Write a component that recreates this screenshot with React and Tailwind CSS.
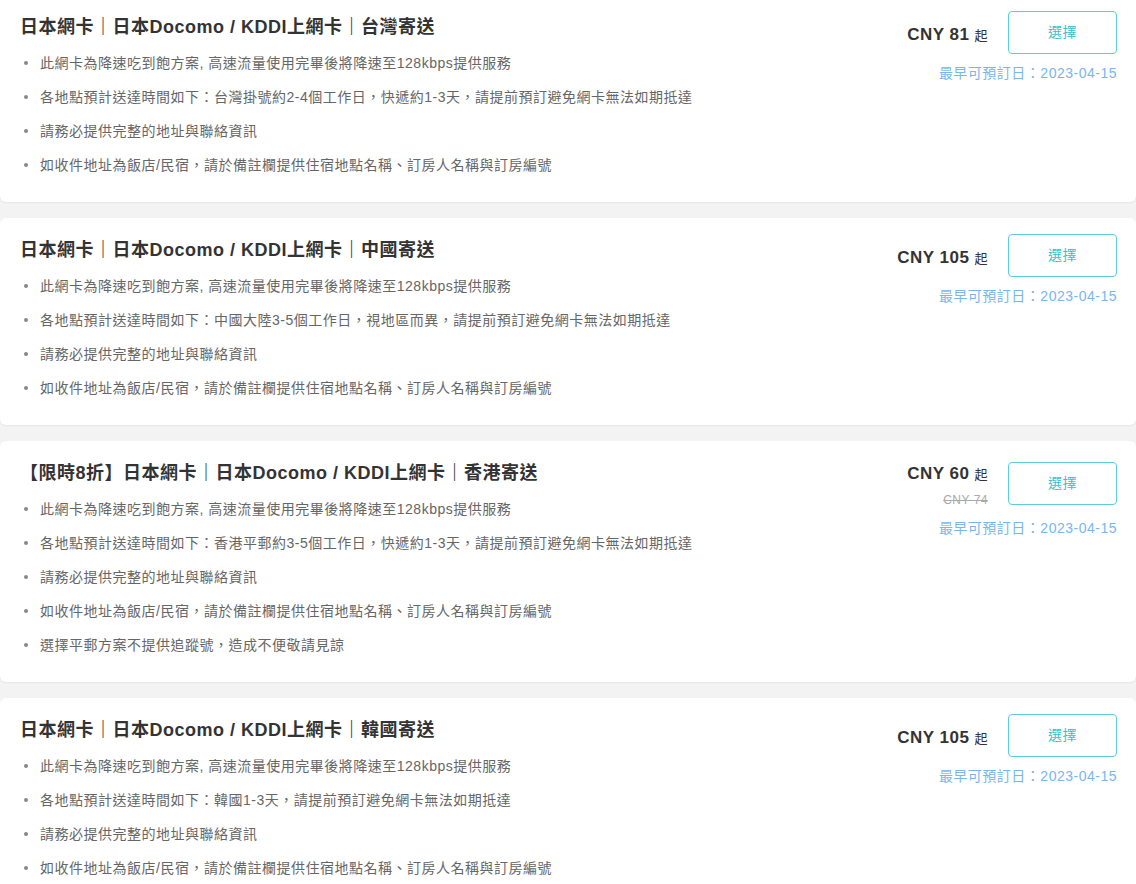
import React from 'react';

const common = [
  '此網卡為降速吃到飽方案, 高速流量使用完畢後將降速至128kbps提供服務',
];
const addr = [
  '請務必提供完整的地址與聯絡資訊',
  '如收件地址為飯店/民宿，請於備註欄提供住宿地點名稱、訂房人名稱與訂房編號',
];

const plans = [
  {
    title: '日本網卡｜日本Docomo / KDDI上網卡｜台灣寄送',
    price: 'CNY 81',
    items: [...common, '各地點預計送達時間如下：台灣掛號約2-4個工作日，快遞約1-3天，請提前預訂避免網卡無法如期抵達', ...addr],
  },
  {
    title: '日本網卡｜日本Docomo / KDDI上網卡｜中國寄送',
    price: 'CNY 105',
    items: [...common, '各地點預計送達時間如下：中國大陸3-5個工作日，視地區而異，請提前預訂避免網卡無法如期抵達', ...addr],
  },
  {
    title: '【限時8折】日本網卡｜日本Docomo / KDDI上網卡｜香港寄送',
    price: 'CNY 60',
    oldPrice: 'CNY 74',
    items: [
      ...common,
      '各地點預計送達時間如下：香港平郵約3-5個工作日，快遞約1-3天，請提前預訂避免網卡無法如期抵達',
      ...addr,
      '選擇平郵方案不提供追蹤號，造成不便敬請見諒',
    ],
  },
  {
    title: '日本網卡｜日本Docomo / KDDI上網卡｜韓國寄送',
    price: 'CNY 105',
    items: [...common, '各地點預計送達時間如下：韓國1-3天，請提前預訂避免網卡無法如期抵達', ...addr],
  },
];

function PlanCard({ plan }) {
  return (
    <div className="bg-white rounded-md shadow-[0_1px_2px_rgba(0,0,0,0.06)] flex justify-between pl-5 pr-[19px] pt-[16px] pb-[20px] tracking-[0.5px]">
      <div className="flex-1 min-w-0">
        <h3 className="text-[18px] leading-[30px] font-bold text-[#333] pt-[1px]">{plan.title}</h3>
        <ul className="mt-[4px]">
          {plan.items.map((t, i) => (
            <li key={i} className="flex items-center h-[34px] text-[14px] text-[#666]">
              <span className="w-[4px] h-[4px] rounded-full bg-[#888] ml-[4px] mr-[12px] shrink-0" />
              {t}
            </li>
          ))}
        </ul>
      </div>
      <div className="flex flex-col items-end shrink-0">
        <div className="flex items-center gap-5">
          <div className="flex flex-col items-end">
            <div className={`flex items-baseline text-[#333] leading-[28px] ${plan.oldPrice ? 'pt-[3px]' : 'pt-[6px]'}`}>
              <span className="text-[17px] font-bold">{plan.price}</span>
              <span className="text-[13px] ml-[5px]">起</span>
            </div>
            {plan.oldPrice && (
              <span className="text-[12px] leading-[18px] text-[#aaa] line-through mt-[2px]">{plan.oldPrice}</span>
            )}
          </div>
          <button className="w-[109px] h-[43px] border border-[#5ccfd6] rounded-[4px] text-[#3dbec8] text-[14px]">
            選擇
          </button>
        </div>
        <div className="text-[14px] leading-[20px] text-[#7ab6ee] mt-[9px]">最早可預訂日：2023-04-15</div>
      </div>
    </div>
  );
}

export default function App() {
  return (
    <div
      className="bg-[#f3f3f3] min-h-screen overflow-hidden"
      style={{ fontFamily: '"Liberation Sans", Arial, "Noto Sans CJK TC", sans-serif' }}
    >
      <div className="flex flex-col gap-4 -mt-[5px]">
        {plans.map((p, i) => (
          <PlanCard key={i} plan={p} />
        ))}
      </div>
    </div>
  );
}
